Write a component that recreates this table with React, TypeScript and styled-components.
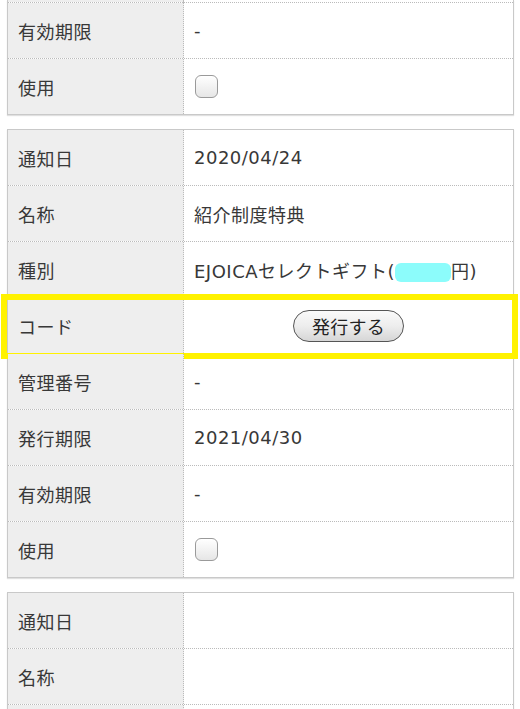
import styled, { createGlobalStyle } from "styled-components";

const GlobalStyle = createGlobalStyle`
  html, body {
    margin: 0;
    padding: 0;
    background: #fff;
    overflow: hidden;
  }
  body {
    font-family: "Noto Sans CJK JP", "Liberation Sans", sans-serif;
    color: #383838;
  }
`;

const Page = styled.div`
  display: flex;
  flex-direction: column;
  gap: 14px;
  padding: 0 6px 0 7px;
`;

const Card = styled.div<{ $cut?: boolean }>`
  border: 1px solid #c9c9c9;
  border-top: ${(p) => (p.$cut ? "none" : "1px solid #c9c9c9")};
  box-shadow: 0 1px 1px rgba(0, 0, 0, 0.12);
  background: #fff;
`;

const Row = styled.div<{ $h?: number; $mark?: boolean }>`
  position: relative;
  display: grid;
  grid-template-columns: 176px 1fr;
  height: ${(p) => p.$h ?? 55}px;
  border-bottom: 1px dotted #bbb;
  &:last-child {
    border-bottom: none;
  }
  ${(p) =>
    p.$mark &&
    `
    &::after {
      content: "";
      position: absolute;
      top: -4px;
      left: -7px;
      right: -5px;
      bottom: -6px;
      border: 6px solid #fff200;
      pointer-events: none;
    }
  `}
`;

const Label = styled.div`
  display: flex;
  align-items: center;
  padding-left: 10px;
  background: #eeeeee;
  border-right: 1px dotted #bbb;
  font-size: 18px;
  letter-spacing: 0.5px;
`;

const Value = styled.div<{ $center?: boolean }>`
  display: flex;
  align-items: center;
  justify-content: ${(p) => (p.$center ? "center" : "flex-start")};
  padding-left: ${(p) => (p.$center ? 0 : 10)}px;
  font-family: "DejaVu Sans", "Noto Sans CJK JP", sans-serif;
  font-size: 18px;
  letter-spacing: 0.5px;
`;

const Check = styled.span`
  display: inline-block;
  width: 21px;
  height: 21px;
  margin-left: 1px;
  border: 1px solid #9a9a9a;
  border-radius: 6px;
  background: linear-gradient(#ffffff, #e6e6e6);
  box-shadow: inset 0 1px 0 #fff;
`;

const IssueButton = styled.button`
  width: 111px;
  height: 32px;
  border: 1px solid #555;
  border-radius: 16px;
  background: linear-gradient(#fafafa 0%, #ededed 50%, #d6d6d6 100%);
  font-family: "Noto Sans CJK JP", sans-serif;
  font-size: 18px;
  color: #222;
  padding: 0;
  letter-spacing: 0.3px;
`;

const Masked = styled.span`
  display: inline-block;
  width: 56px;
  height: 19px;
  border-radius: 6px;
  background: #8cfcfb;
  vertical-align: middle;
`;

type Field = { label: string; value?: React.ReactNode; center?: boolean; mark?: boolean };

const Table = ({ rows, cut }: { rows: Field[]; cut?: boolean }) => (
  <Card $cut={cut}>
    {cut && (
      <Row $h={2}>
        <Label />
        <Value />
      </Row>
    )}
    {rows.map((r, i) => (
      <Row key={i} $mark={r.mark}>
        <Label>{r.label}</Label>
        <Value $center={r.center}>{r.value}</Value>
      </Row>
    ))}
  </Card>
);

export default function App() {
  return (
    <>
      <GlobalStyle />
      <Page>
        <Table
          cut
          rows={[
            { label: "有効期限", value: "-" },
            { label: "使用", value: <Check /> },
          ]}
        />
        <Table
          rows={[
            { label: "通知日", value: "2020/04/24" },
            { label: "名称", value: "紹介制度特典" },
            {
              label: "種別",
              value: (
                <span>
                  EJOICAセレクトギフト(<Masked />円)
                </span>
              ),
            },
            { label: "コード", value: <IssueButton>発行する</IssueButton>, center: true, mark: true },
            { label: "管理番号", value: "-" },
            { label: "発行期限", value: "2021/04/30" },
            { label: "有効期限", value: "-" },
            { label: "使用", value: <Check /> },
          ]}
        />
        <Table
          rows={[
            { label: "通知日" },
            { label: "名称" },
            { label: "" },
          ]}
        />
      </Page>
    </>
  );
}
